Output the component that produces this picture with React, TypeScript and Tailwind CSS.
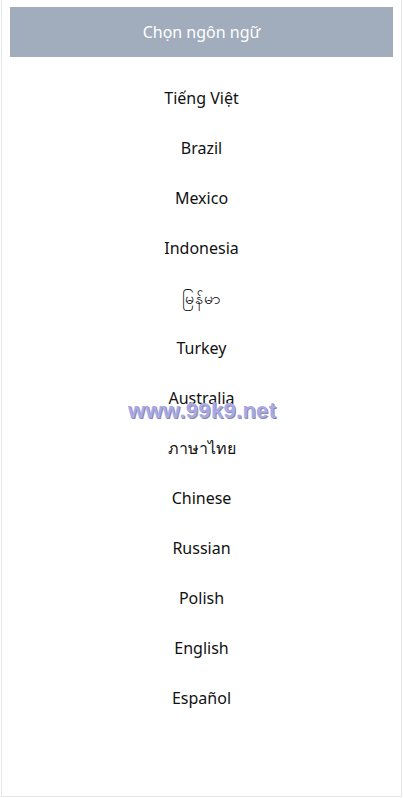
import React from "react";

const langs = [
  "Tiếng Việt",
  "Brazil",
  "Mexico",
  "Indonesia",
  "မြန်မာ",
  "Turkey",
  "Australia",
  "ภาษาไทย",
  "Chinese",
  "Russian",
  "Polish",
  "English",
  "Español",
];

export default function App() {
  return (
    <div className="relative w-[403px] h-[798px] bg-white" style={{ fontFamily: '"Noto Sans", "Open Sans", sans-serif' }}>
      <div className="ml-[1px] w-[401px] h-[797px] border-l border-r border-b border-[#e6e6e6] px-[8px] pt-[7px]">
        <div className="h-[50px] bg-[#a1acbd] flex items-center justify-center text-white text-[16px] pb-[1px]">
          Chọn ngôn ngữ
        </div>
        <ul className="pt-[16px]">
          {langs.map((l) => (
            <li key={l} className="h-[50px] flex items-center justify-center text-[16px] text-[#111]">
              {l}
            </li>
          ))}
        </ul>
      </div>
      <div
        className="absolute left-[128px] top-[400px] text-[22px] font-bold text-[#a9a9e6] leading-none tracking-[0.3px]"
        style={{ fontFamily: '"Liberation Sans", Arial, sans-serif', textShadow: "1px 1px 0 #8a8aa8" }}
      >
        www.99k9.net
      </div>
    </div>
  );
}
